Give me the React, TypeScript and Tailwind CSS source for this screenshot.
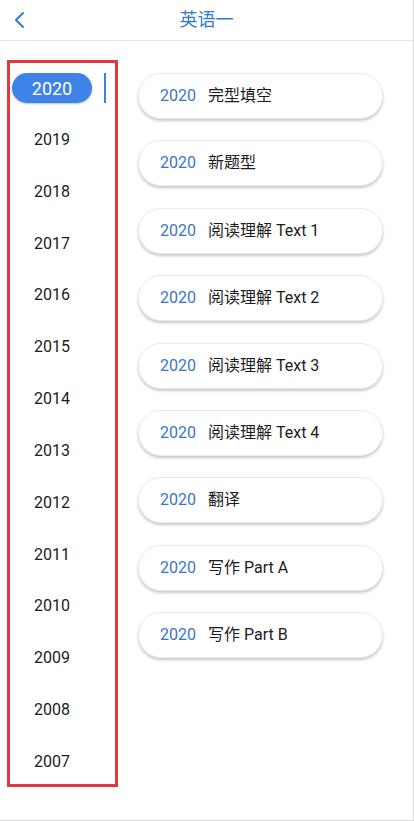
import React, { useState } from 'react';

const years = ['2020', '2019', '2018', '2017', '2016', '2015', '2014', '2013', '2012', '2011', '2010', '2009', '2008', '2007'];

const sections = ['完型填空', '新题型', '阅读理解 Text 1', '阅读理解 Text 2', '阅读理解 Text 3', '阅读理解 Text 4', '翻译', '写作 Part A', '写作 Part B'];

const App: React.FC = () => {
  const [active, setActive] = useState('2020');

  return (
    <div
      className="w-[414px] h-[821px] bg-white border-r border-b border-[#d9d9d9] overflow-hidden"
      style={{ fontFamily: 'Roboto, "Noto Sans CJK SC", sans-serif' }}
    >
      {/* header */}
      <div className="relative h-[41px] border-b border-[#e6e6e6] flex items-center justify-center">
        <button className="absolute left-[12px] top-[10px] text-[#2f7bd6]">
          <svg width="16" height="20" viewBox="0 0 16 20" fill="none">
            <path d="M11 3 L4 10 L11 17" stroke="currentColor" strokeWidth="2" strokeLinecap="round" strokeLinejoin="round" />
          </svg>
        </button>
        <span className="text-[18px] text-[#2f7bd6] leading-none">英语一</span>
      </div>

      <div className="flex">
        {/* year list */}
        <div className="ml-[7px] mt-[19px] w-[111px] border-[3px] border-[#e0393e] pt-[3px] flex flex-col gap-[7.85px]">
          {years.map((y) => (
            <div key={y} className="h-[44px] flex items-center" onClick={() => setActive(y)}>
              {y === active ? (
                <>
                  <div className="ml-[2px] w-[80px] h-[30px] rounded-full bg-[#3f82e8] shadow-[0_1px_2px_rgba(0,0,0,0.25)] flex items-center justify-center text-white text-[18px]">
                    {y}
                  </div>
                  <div className="ml-[12px] w-[2px] h-[30px] bg-[#3f7fe0]" />
                </>
              ) : (
                <div className="ml-[2px] w-[80px] text-center text-[16px] text-[#1c1c1c]">{y}</div>
              )}
            </div>
          ))}
        </div>

        {/* sections */}
        <div className="ml-[20px] mt-[32px] flex flex-col gap-[21.4px]">
          {sections.map((s) => (
            <div
              key={s}
              className="w-[245px] h-[46px] rounded-full border border-[#ececec] bg-white shadow-[0_2px_3px_rgba(0,0,0,0.22)] flex items-center pl-[21px] text-[16px]"
            >
              <span className="text-[#3a76c6]">{active}</span>
              <span className="ml-[12px] text-[#1c1c1c]">{s}</span>
            </div>
          ))}
        </div>
      </div>
    </div>
  );
};

export default App;
